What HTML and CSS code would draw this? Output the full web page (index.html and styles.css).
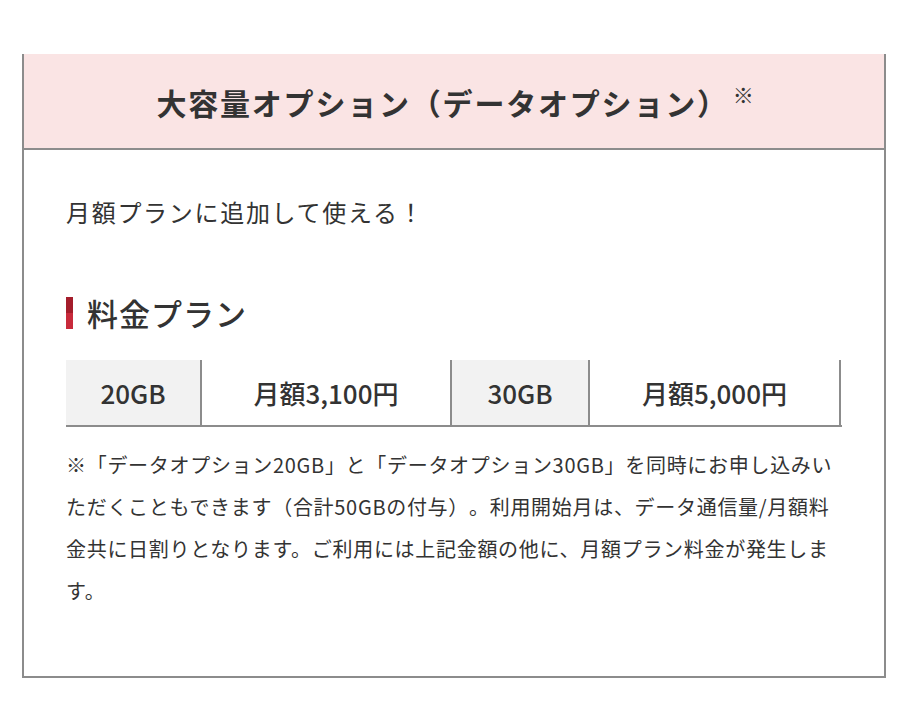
FILE: index.html
```html
<!DOCTYPE html>
<html lang="ja">
<head>
  <meta charset="UTF-8">
  <meta name="viewport" content="width=device-width, initial-scale=1">
  <title>大容量オプション（データオプション）</title>
  <link rel="stylesheet" href="styles.css">
</head>
<body>
  <section class="option-box">
    <div class="option-head">
      <h2>大容量オプション（データオプション）<sup>※</sup></h2>
    </div>
    <div class="option-body">
      <p class="lead">月額プランに追加して使える！</p>
      <h3 class="plan-title">料金プラン</h3>
      <div class="plan-table">
        <div class="cell cell-label">20GB</div>
        <div class="cell">月額3,100円</div>
        <div class="cell cell-label">30GB</div>
        <div class="cell">月額5,000円</div>
      </div>
      <p class="note">※「データオプション20GB」と「データオプション30GB」を同時にお申し込みいただくこともできます（合計50GBの付与）。利用開始月は、データ通信量/月額料金共に日割りとなります。ご利用には上記金額の他に、月額プラン料金が発生します。</p>
    </div>
  </section>
</body>
</html>
```

FILE: styles.css
```css
* {
  margin: 0;
  padding: 0;
  box-sizing: border-box;
}
body {
  font-family: "Noto Sans CJK JP", "Noto Sans", sans-serif;
  color: #333;
  background: #fff;
  text-spacing-trim: space-all;
}
.option-box {
  width: 864px;
  margin: 54px 0 0 22px;
  border: 2px solid #8c8c8c;
  border-top: none;
}
.option-head {
  height: 96px;
  background: #fae4e4;
  border-bottom: 2px solid #8c8c8c;
  display: flex;
  align-items: center;
  justify-content: center;
}
.option-head h2 {
  font-size: 30px;
  font-weight: 700;
  letter-spacing: 1.8px;
  line-height: 1.2;
  padding-left: 4px;
}
.option-head sup {
  font-size: 21px;
  font-weight: 400;
  vertical-align: 12px;
  margin-left: 4px;
}
.option-body {
  padding: 44px 42px 64px;
}
.lead {
  font-size: 24px;
  letter-spacing: 1.7px;
  line-height: 36px;
}
.plan-title {
  display: flex;
  align-items: center;
  gap: 14px;
  margin-top: 64px;
  font-size: 31px;
  font-weight: 500;
  letter-spacing: 1px;
  line-height: 38px;
}
.plan-title::before {
  content: "";
  width: 7px;
  height: 32px;
  background: linear-gradient(#a41d2b 50%, #c82a3b 50%);
}
.plan-table {
  display: grid;
  grid-template-columns: 136px 250px 138px 251px;
  margin-top: 28px;
  border-bottom: 2px solid #8c8c8c;
}
.cell {
  height: 65px;
  display: flex;
  align-items: center;
  justify-content: center;
  font-size: 26px;
  font-weight: 500;
  border-right: 2px solid #8c8c8c;
}
.cell-label {
  background: #f2f2f2;
}
.note {
  margin-top: 17px;
  font-size: 20px;
  letter-spacing: 0.7px;
  line-height: 42px;
}
```
